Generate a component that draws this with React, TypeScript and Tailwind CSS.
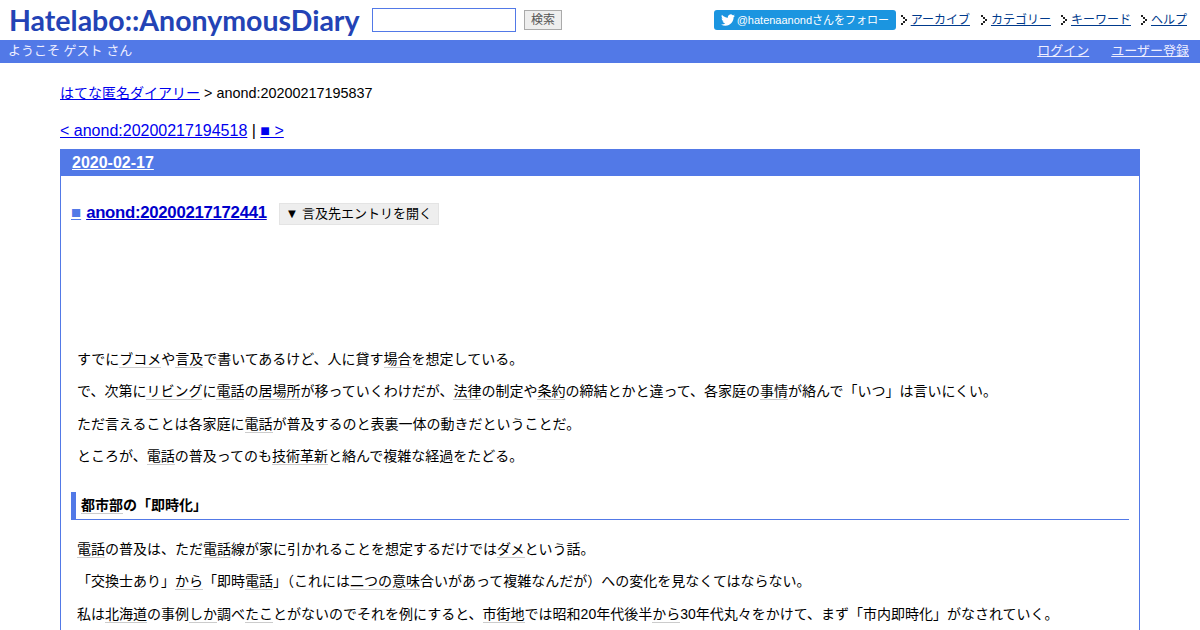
import React from "react";

const SANS = "font-['Liberation_Sans','Noto_Sans_CJK_JP',sans-serif]";

// k marks a keyword link with the pale underline
const K = ({ children }: { children: React.ReactNode }) => (
  <span className="border-b border-[#ccc]">{children}</span>
);

const P = ({ children }: { children: React.ReactNode }) => (
  <p className="ml-[6px] mb-[10.8px] h-[21.5px] leading-[21.5px] text-[14px] text-black">{children}</p>
);

const TwitterIcon = () => (
  <svg viewBox="0 0 24 24" className="w-[14px] h-[14px] fill-white">
    <path d="M23.95 4.57a10 10 0 0 1-2.82.77 4.96 4.96 0 0 0 2.16-2.72c-.95.55-2 .95-3.12 1.18a4.92 4.92 0 0 0-8.38 4.48C7.69 8.1 4.07 6.13 1.64 3.16a4.82 4.82 0 0 0-.66 2.48c0 1.7.87 3.2 2.18 4.09a4.9 4.9 0 0 1-2.23-.61v.06a4.92 4.92 0 0 0 3.95 4.83 5 5 0 0 1-2.21.08 4.94 4.94 0 0 0 4.6 3.42A9.87 9.87 0 0 1 0 19.54a14 14 0 0 0 7.56 2.21c9.05 0 14-7.5 14-13.98 0-.21 0-.42-.02-.63A9.94 9.94 0 0 0 24 4.59z" />
  </svg>
);

const Arrow = () => (
  <svg viewBox="0 0 8 10" className="w-[8px] h-[10px] mr-[3px]">
    <path d="M1 0h2v2h2v2h2v2H5v2H3v2H1V8h2V6h2V4H3V2H1z" fill="#222" />
  </svg>
);

const navItems = ["アーカイブ", "カテゴリー", "キーワード", "ヘルプ"];

export default function App() {
  return (
    <div className={`${SANS} h-[630px] overflow-hidden bg-white`}>
      {/* header */}
      <div className="h-[40px] flex items-center justify-between pl-[9px] pr-[13px]">
        <div className="flex items-center">
          <span className="w-[349px] font-['Lato',sans-serif] font-bold text-[28.5px] leading-[40px] text-[#2343b5] whitespace-nowrap">
            Hatelabo::AnonymousDiary
          </span>
          <input className="ml-[14px] w-[144px] h-[24px] border border-[#5279e7] bg-white" />
          <button className="ml-[8px] w-[38px] h-[20px] border border-[#aaa] bg-[#eee] text-[12px] leading-[18px] text-[#555]">検索</button>
        </div>
        <div className="flex items-center text-[12px]">
          <div className="flex items-center h-[20px] w-[182px] mr-[4px] pl-[7px] rounded-[3px] bg-[#1b95e0] text-white text-[11px]">
            <TwitterIcon />
            <span className="ml-[2px] whitespace-nowrap">@hatenaanondさんをフォロー</span>
          </div>
          {navItems.map((item, i) => (
            <div key={item} className={`flex items-center ${i === 1 ? "ml-[10px]" : i > 1 ? "ml-[9px]" : ""}`}>
              <Arrow />
              <a className="underline text-[#003a8c]">{item}</a>
            </div>
          ))}
        </div>
      </div>
      {/* nav bar */}
      <div className="h-[23px] bg-[#5279e7] flex items-center justify-between pl-[8px] pr-[11px] pb-[1px] text-[13px] text-[#eef]">
        <span>ようこそ ゲスト さん</span>
        <div className="flex gap-[22px]">
          <a className="underline">ログイン</a>
          <a className="underline">ユーザー登録</a>
        </div>
      </div>
      {/* main */}
      <div className="mx-[60px] pt-[21px]">
        <div className="text-[14.4px] leading-[18px] text-black">
          <a className="underline text-[14px] text-[#0000ee]">はてな匿名ダイアリー</a> &gt; anond:20200217195837
        </div>
        <div className="mt-[18px] text-[16px] leading-[21px] text-black">
          <a className="underline text-[#0000ee]">&lt; anond:20200217194518</a> | <a className="underline text-[#0000ee]">■ &gt;</a>
        </div>
        <div className="mt-[8px] border border-[#5279e7]">
          <div className="h-[26px] bg-[#5279e7] pl-[11px] text-[16px] leading-[26px] font-bold text-white">
            <a className="underline">2020-02-17</a>
          </div>
          <div className="px-[10px] pb-[40px]">
            <div className="mt-[26px] h-[22px] flex items-center">
              <a className="underline text-[#5279e7] text-[16.8px] font-bold">■</a>
              <a className="ml-[5px] underline text-[#0000cc] text-[16.8px] font-bold tracking-[-0.3px]">anond:20200217172441</a>
              <button className="ml-[12px] mt-[2px] w-[160px] h-[22px] bg-[#eee] border border-[#e4e4e4] text-[13px] text-black">▼ 言及先エントリを開く</button>
            </div>
            <div className="h-[125px]" />
            <P>すでに<K>ブコメ</K>や<K>言及</K>で書いてあるけど、人に貸す<K>場合</K>を想定している。</P>
            <P>で、次第に<K>リビング</K>に<K>電話</K>の<K>居場所</K>が移っていくわけだが、<K>法律</K>の制定や<K>条約</K>の締結とかと違って、各家庭の<K>事情</K>が絡んで「いつ」は言いにくい。</P>
            <P>ただ言えることは各家庭に<K>電話</K>が普及するのと表裏一体の動きだということだ。</P>
            <P>ところが、<K>電話</K>の普及ってのも<K>技術革新</K>と絡んで複雑な経過をたどる。</P>
            <h3 className="mt-[24.8px] h-[28px] border-l-[5px] border-b border-l-[#5279e7] border-b-[#5279e7] pl-[5px] text-[14px] leading-[26px] font-bold text-black">
              <K>都市部</K>の「即時化」
            </h3>
            <div className="mt-[19px]">
              <P><K>電話</K>の普及は、ただ<K>電話</K>線が家に引かれることを想定するだけでは<K>ダメ</K>という話。</P>
              <P>「交換士あり」<K>から</K>「即時<K>電話</K>」（これには<K>二つの意味</K>合いがあって複雑なんだが）への変化を見なくてはならない。</P>
              <P>私は<K>北海道</K>の事例<K>しか</K>調べ<K>たこ</K>とがないのでそれを例にすると、<K>市街地</K>では昭和20年代後半<K>から</K>30年代丸々をかけて、まず「市内即時化」がなされていく。</P>
            </div>
          </div>
        </div>
      </div>
    </div>
  );
}
